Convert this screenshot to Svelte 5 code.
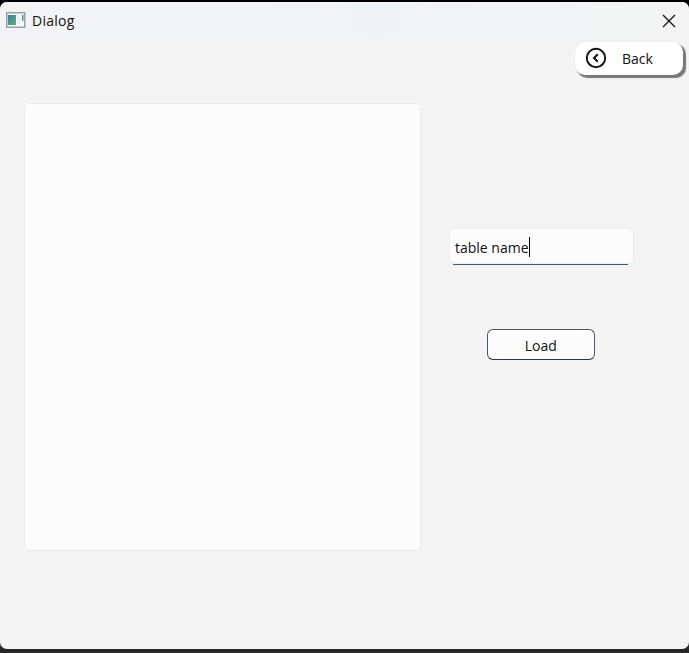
<script>
  let tableName = $state('table name');
</script>

<div class="desktop">
  <main class="window">
    <header>
      <svg class="app" width="20" height="17" viewBox="0 0 20 17">
        <defs>
          <linearGradient id="pane" x1="0" y1="0" x2="1" y2="1">
            <stop offset="0" stop-color="#4377a4" />
            <stop offset="1" stop-color="#58b583" />
          </linearGradient>
        </defs>
        <rect x=".75" y=".75" width="18" height="14.5" fill="#f7f8f8" stroke="#939ba7" stroke-width="1.4" />
        <rect x="2" y="3" width="8" height="10" fill="url(#pane)" />
        <rect x="11" y="3" width="3" height="10" fill="#eeeeee" />
        <rect x="16" y="3" width="1.5" height="6" fill="url(#pane)" />
      </svg>
      <h1>Dialog</h1>
      <svg class="close" width="14" height="14" viewBox="0 0 14 14">
        <path d="M1 1 13 13M13 1 1 13" stroke="#111" stroke-width="1.25" />
      </svg>
    </header>
    <nav>
      <button class="back">
        <svg width="22" height="22" viewBox="0 0 22 22" fill="none" stroke="#111">
          <circle cx="11" cy="11" r="9.2" stroke-width="1.9" />
          <path d="M12.8 7.3 9 11l3.8 3.7" stroke-width="2" />
        </svg>
        <span>Back</span>
      </button>
    </nav>
    <div class="content">
      <section class="list"></section>
      <section class="form">
        <div class="field"><span>{tableName}</span><i></i></div>
        <div class="underline"></div>
        <button class="load">Load</button>
      </section>
    </div>
  </main>
</div>

<style>
  :global(body) { margin: 0; background: #000; }
  * { box-sizing: border-box; }
  .desktop {
    width: 689px;
    height: 653px;
    padding-top: 2px;
    overflow: hidden;
    background: linear-gradient(#000 0 50%, #272727 50%);
    font-family: "Open Sans", "Noto Sans", sans-serif;
    font-size: 14px;
    color: #111;
  }
  .window {
    height: 647px;
    background: #f3f3f3;
    border-radius: 7px;
    overflow: hidden;
  }
  header {
    height: 37px;
    display: flex;
    align-items: center;
    padding: 0 13px 0 6px;
    background: linear-gradient(90deg, #f3f3f5, #f0f3f5 55%, #f3f3f3);
  }
  .app { margin-top: -1px; }
  h1 {
    flex: 1;
    margin: 0 0 0 6px;
    font-size: 14px;
    font-weight: 400;
    letter-spacing: 0.25px;
    line-height: 20px;
  }
  button {
    margin: 0;
    padding: 0;
    font: inherit;
    color: inherit;
  }
  nav {
    display: flex;
    justify-content: flex-end;
    padding: 3px 6px 0 0;
    height: 64px;
  }
  .back {
    width: 108px;
    height: 33px;
    display: flex;
    align-items: center;
    padding-left: 10px;
    border: 0;
    border-radius: 10px;
    background: #fff;
    box-shadow: 2.5px 2.5px 1px #777, 0 0 1px #ccc;
  }
  .back svg { margin-top: -2px; }
  .back span { margin-left: 15px; }
  .content {
    display: flex;
    padding-left: 24px;
  }
  .list {
    width: 397px;
    height: 448px;
    border: 1px solid #ebebeb;
    border-radius: 5px;
    background: #fcfcfc;
  }
  .form {
    width: 185px;
    margin: 125px 0 0 28px;
    display: flex;
    flex-direction: column;
  }
  .field {
    height: 36px;
    display: flex;
    align-items: center;
    padding: 1px 0 0 5px;
    border: 1px solid #ececec;
    border-radius: 6px;
    background: #fcfcfc;
  }
  .field span { padding-top: 2px; }
  .field i { width: 1px; height: 20px; background: #000; }
  .underline {
    width: 175px;
    height: 1px;
    margin-left: 4px;
    background: #465f6c;
  }
  .load {
    width: 107.5px;
    height: 31px;
    margin: 64px 0 0 38px;
    padding-top: 2px;
    border: 1.3px solid #465964;
    border-bottom-color: #26343d;
    border-radius: 6px;
    background: #fcfcfc;
  }
</style>
